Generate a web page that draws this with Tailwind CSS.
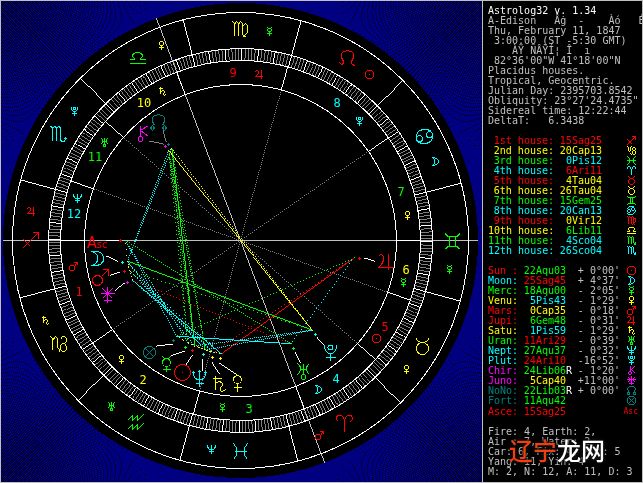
<!DOCTYPE html>
<html lang="en">
<head>
<meta charset="utf-8">
<meta name="viewport" content="width=device-width, initial-scale=1">
<title>Astrolog32 v. 1.34</title>
<script src="https://cdn.jsdelivr.net/npm/@tailwindcss/browser@4"></script>
</head>
<body class="bg-black">
<svg class="hidden" aria-hidden="true">
  <defs>
    <g id="Ari"><path d="M0 8V-1C0-10-8-10-8-5Q-8-3-6-2M0-1C0-10 8-10 8-5Q8-3 6-2"/></g>
    <g id="Tau"><circle cy="2" r="6"/><path d="M-6-8Q-5-4 0-4Q5-4 6-8"/></g>
    <g id="Gem"><path d="M-7-8Q-6-5-3-5H3Q6-5 7-8M-7 8Q-6 5-3 5H3Q6 5 7 8M-3-5V5M3-5V5"/></g>
    <g id="Can"><circle cx="-5" cy="2" r="3"/><circle cx="5" cy="-2" r="3"/><path d="M-8 0C-8-7 1-9 7-5M8 0C8 7-1 9-7 5"/></g>
    <g id="Leo"><path d="M-8 4L-6 6L-4 5V3L-6-1C-9-10 9-10 6-1L4 3V5L8 8"/></g>
    <g id="Vir"><path d="M-8-8L-6-6V6M-6-5L-4-8L-2-6V6M-2-5L0-8L2-6V5L6 8M2-3L5-6L7-4V3L2 8"/></g>
    <g id="Lib"><path d="M-8 5H8M-8 1H-3V0C-7-3-4-6 0-6S7-3 3 0V1H8"/></g>
    <g id="Sco"><path d="M-8-8L-6-7V6M-6-6L-4-8L-2-7V6M-2-6L0-8L2-7V4Q2 7 5 7Q7 7 7 3M5 5L7 3L9 5"/></g>
    <g id="Sag"><path d="M-8 8L8-8M2-8H8V-2M-7-1L0 6"/></g>
    <g id="Cap"><path d="M-8-8L-6-6V5M-6-4L-3-8L-1-6V3L2 6M2-5L4-8H6L8-6V-3L6-1H4L2 1V5L0 8M4-1H6L8 2V5L6 7H4L2 5"/></g>
    <g id="Aqu"><path d="M-8-2L-3-7V-2L2-7V-2L8-8M-8 7L-3 2V7L2 2V7L8 1"/></g>
    <g id="Pis"><path d="M-7-8Q0 0-7 8M7-8Q0 0 7 8M-6 0H6"/></g>
    <g id="Sun"><circle r="8"/><path d="M-.5 0H.5"/></g>
    <g id="Moon"><path d="M-6-7C9-9 9 9-6 7C1 4 1-4-6-7Z"/></g>
    <g id="Merc"><circle cy="-1" r="4"/><path d="M-4-8Q-4-5 0-5Q4-5 4-8M0 3V8M-4 6H4"/></g>
    <g id="Venu"><circle cy="-4" r="4"/><path d="M0 0V8M-4 4H4"/></g>
    <g id="Mars"><circle cx="-3" cy="3" r="5"/><path d="M1-1L8-8M2-8H8V-2"/></g>
    <g id="Jupi"><path d="M-7-5Q-5-8-3-6Q0-3-3 1Q-4 4-7 6H8M3-8V8"/></g>
    <g id="Satu"><path d="M-4-8V6M-7-5H2M-4 0Q-1-3 2-1Q4 1 2 3Q0 5 1 7Q3 9 6 6"/></g>
    <g id="Uran"><path d="M-6-8Q-3-6-3-3Q-3 1-6 3M6-8Q3-6 3-3Q3 1 6 3M-3-2H3M0-8V3"/><circle cy="5.5" r="2.5"/></g>
    <g id="Nept"><path d="M-6-7C-6-1-5 1 0 1S6-1 6-7M0-8V8M-4 5H4M-8-5L-6-7L-4-5M-2-6L0-8L2-6M4-5L6-7L8-5"/></g>
    <g id="Plut"><path d="M-6-8C-6-2-4 1 0 1S6-2 6-8M0 1V8M-5 5H5"/><circle cy="-5" r="2.5"/></g>
    <g id="Chir"><path d="M-2-8V3M6-8L-2-3L6 3"/><circle cx="-2" cy="5.5" r="2.5"/></g>
    <g id="Juno"><path d="M0-8V8M-7-1H7M-5-6L5 4M5-6L-5 4M-4 6H4"/></g>
    <g id="NoNo"><path d="M-4 3L-6-1C-9-10 9-10 6-1L4 3M-6 3L-4 5.5L-6 8L-8 5.5ZM6 3L8 5.5L6 8L4 5.5Z"/></g>
    <g id="Fort"><circle r="6"/><path d="M-4-4L4 4M4-4L-4 4"/></g>
  </defs>
</svg>

<main class="flex items-stretch border border-[#c0c0c0] bg-black text-[#c0c0c0]">
  <section class="relative min-w-0 flex-1 border-r border-[#c0c0c0]" aria-label="Natal wheel">
    <canvas id="burst" width="481" height="481" class="absolute inset-0 h-full w-full [image-rendering:pixelated]"></canvas>
    <svg id="wheel" viewBox="1 1 481 481" class="relative block w-full font-['DejaVu_Sans_Mono',monospace]" fill="none" shape-rendering="crispEdges"></svg>
  </section>

  <aside class="relative w-[159px] shrink-0 overflow-hidden pt-[5px] pl-[5px] font-['DejaVu_Sans_Mono',monospace] text-[10px] leading-[10px] *:whitespace-pre">
    <h1 class="text-white">Astrolog32 v. 1.34</h1>
    <p>A-Edison   Âġ  -    Àó   É</p>
    <p>Thu, February 11, 1847</p>
    <p> 3:00:00 (ST -5:30 GMT)</p>
    <p>    ÀŸ ÑÂŸÍ¦ Î  ı</p>
    <p> 82°36'00"W 41°18'00"N</p>
    <p>Placidus houses.</p>
    <p>Tropical, Geocentric.</p>
    <p>Julian Day: 2395703.8542</p>
    <p>Obliquity: 23°27'24.4735"</p>
    <p>Sidereal time: 12:22:44</p>
    <p>DeltaT:   6.3438</p>
    <table class="mt-2.5 w-full table-fixed" aria-label="House cusps">
      <colgroup><col class="w-[66px]"><col class="w-[48px]"><col></colgroup>
      <tbody id="houses"></tbody>
    </table>
    <table class="mt-2.5 w-full table-fixed" aria-label="Planet positions">
      <colgroup><col class="w-[30px]"><col class="w-[48px]"><col class="w-[6px]"><col class="w-[48px]"><col></colgroup>
      <tbody id="planets"></tbody>
    </table>
    <p class="mt-2.5">Fire: 4, Earth: 2,</p>
    <p>Air : 7, Water: 2</p>
    <p>Car: 6, Fix: 4, Mut: 5</p>
    <p>Yang: 11, Yin: 4</p>
    <p>M: 2, N: 12, A: 11, D: 3</p>
    <div class="absolute bottom-5 left-[26px] font-['Noto_Sans_CJK_SC',sans-serif] text-[24px] leading-6 font-medium text-white [text-shadow:0_0_2px_#000,0_0_3px_#000,0_0_4px_#333]"><span class="text-[#f04010]">辽宁</span>龙网</div>
  </aside>
</main>

<script>
const R = '#ff0000', Y = '#ffff00', G = '#00ff00', C = '#00ffff', M = '#ff00ff', T = '#008080', W = '#ffffff', S = '#c0c0c0', D = '#808080';
const signs = ['Ari','Tau','Gem','Can','Leo','Vir','Lib','Sco','Sag','Cap','Aqu','Pis'];
const element = [R, Y, G, C];
const longitude = p => +p.slice(0, -5) + +p.slice(-2) / 60 + 30 * signs.indexOf(p.slice(-5, -2));
const signColor = p => element[signs.indexOf(p.slice(-5, -2)) % 4];

const houses = ['15Sag25','20Cap13','0Pis12','6Ari11','4Tau04','26Tau04','15Gem25','20Can13','0Vir12','6Lib11','4Sco04','26Sco04'];
const ordinals = ['1st','2nd','3rd','4th','5th','6th','7th','8th','9th','10th','11th','12th'];
const houseSigns = ['Sag','Cap','Pis','Ari','Tau','Tau','Gem','Can','Vir','Lib','Sco','Sco'];
const planets = [
  ['Sun','22Aqu03','',"+ 0°00'",R], ['Moon','25Sag45','',"+ 4°37'",C], ['Merc','18Aqu00','',"- 2°05'",G],
  ['Venu','5Pis43','',"- 1°29'",Y], ['Mars','0Cap35','',"- 0°18'",R], ['Jupi','6Gem48','',"- 0°31'",R],
  ['Satu','1Pis59','',"- 1°29'",Y], ['Uran','11Ari29','',"- 0°39'",G], ['Nept','27Aqu37','',"- 0°32'",C],
  ['Plut','24Ari10','',"-16°52'",C], ['Chir','24Lib06','R',"- 1°20'",M], ['Juno','5Cap40','',"+11°00'",M],
  ['NoNo','22Lib03','R',"+ 0°00'",T], ['Fort','11Aqu42','','',T], ['Asce','15Sag25','','',R]
];

/* Nine-pixel versions of the symbols */
const tiny = {
  Sun: '..#####../.#.....#./#.......#/#.......#/#...#...#/#.......#/#.......#/.#.....#./..#####..',
  Moon: '.###...../..#.##.../...#..#../...#...#./...#...#./...#...#./...#..#../..#.##.../.###.....',
  Merc: '..#...#../...###.../..#...#../..#...#../...###.../....#..../..#####../....#..../....#....',
  Venu: '...###.../..#...#../..#...#../..#...#../...###.../....#..../..#####../....#..../....#....',
  Mars: '.....####/.......##/......#.#/.####.#../#....#.../#....#.../#....#.../#....#.../.####....',
  Jupi: '.##...#../#..#..#../...#..#../...#..#../..#...#../.#....#../########./......#../......#..',
  Satu: '..#....../.####..../..#....../..#.##.../..##..#../..#...#../..#..#.../.....#.#./......#..',
  Uran: '.#..#..#./..#.#.#../..#.#.#../..#####../..#.#.#../.#..#..#./...###.../...#.#.../...###...',
  Nept: '#...#...#/#...#...#/##..#..##/.#..#..#./..#####../....#..../..#####../....#..../....#....',
  Plut: '.#.###.#./.#.#.#.#./.#.###.#./..#...#../...###.../....#..../..#####../....#..../....#....',
  Chir: '...#...#./...#..#../...#.#.../...##..../...#.#.../..##..#../.#..#..#./.#..#..../..##.....',
  Juno: '....#..../.#..#..#./..#.#.#../#########/..#.#.#../.#..#..#./....#..../..#####../....#....',
  NoNo: '..#####../.#.....#./#.......#/#.......#/.#.....#./.#.....#./###...###/#.#...#.#/###...###',
  Fort: '..#####../.#.....#./#.#...#.#/#..#.#..#/#...#...#/#..#.#..#/#.#...#.#/.#.....#./..#####..',
  Sag: '.....####/.......##/......#.#/#....#..#/.#..#..../..##...../..##...../.#..#..../#........',
  Cap: '#...#..../.#.#..##./.#.#.#..#/.#.#.#..#/.#.#..##./..#..#..#/.....#..#/...#.#..#/....#.##.',
  Pis: '#.......#/.#.....#./..#...#../..#...#../#########/..#...#../..#...#../.#.....#./#.......#',
  Ari: '.##...##./#..#.#..#/#..#.#..#/....#..../....#..../....#..../....#..../....#..../....#....',
  Tau: '.#.....#./..#...#../...###.../..#...#../.#.....#./.#.....#./.#.....#./..#...#../...###...',
  Gem: '#.......#/.#######./...#.#.../...#.#.../...#.#.../...#.#.../...#.#.../.#######./#.......#',
  Can: '..#####../.#...##../#...#..#./.##.#..#./#..#.##.#/#..#....#/.##....#./#.....#../.#####...',
  Vir: '#.#..#.../.#.##.#../.#..#.###/.#..#.#.#/.#..#.#.#/.#..#.#.#/.#..#.##./.#..#.#../.....#.#.',
  Lib: '........./..#####../.#.....#./.#.....#./..#...#../###...###/........./#########/.........',
  Sco: '#.#..#.../.#.##.#../.#..#.#../.#..#.#../.#..#.#../.#..#.#../.#..#.#.#/.#..#..##/.......##'
};
const dots = id => tiny[id].split('/').map((row, y) => [...row].map((p, x) => p === '#' ? `M${x} ${y}h1v1h-1z` : '').join('')).join('');

const icon = (id, c) => id === 'Asce'
  ? `<span class="text-[8px]" style="color:${c}">Asc</span>`
  : `<svg viewBox="0 0 9 9" class="inline-block h-[9px] w-[9px] align-top" shape-rendering="crispEdges" fill="${c}"><path d="${dots(id)}"/></svg>`;

document.getElementById('houses').innerHTML = houses.map((p, i) => {
  const c = element[i % 4];
  return `<tr class="h-[10px]"><th scope="row" class="p-0 text-right font-normal" style="color:${c}">${ordinals[i]} house:</th><td class="p-0 text-right" style="color:${signColor(p)}">${p}</td><td class="p-0 pr-1.5 text-right">${icon(houseSigns[i], c)}</td></tr>`;
}).join('');
document.getElementById('planets').innerHTML = planets.map(([n, p, r, d, c]) =>
  `<tr class="h-[10px]"><th scope="row" class="p-0 text-left font-normal" style="color:${c}">${n.padEnd(4)}:</th><td class="p-0 text-right" style="color:${signColor(p)}">${p}</td><td class="p-0 text-white">${r}</td><td class="p-0 text-right">${d}</td><td class="${n === 'Asce' ? 'p-0 pr-1 text-right' : 'p-0 pr-1.5 text-right'}">${icon(n, c)}</td></tr>`).join('');

/* Radial navy burst behind the wheel */
const ctx = document.getElementById('burst').getContext('2d');
ctx.fillStyle = '#000080';
for (let i = 0, n = 1680; i < n; i++) {
  const a = i * 2 * Math.PI / n, dx = Math.cos(a), dy = Math.sin(a), k = Math.max(Math.abs(dx), Math.abs(dy));
  for (let s = 160; s <= 241; s++) ctx.fillRect(Math.round(240 + dx / k * s), Math.round(240 + dy / k * s), 1, 1);
}

/* Wheel */
const O = 240.5;
const at = (lon, r) => { const a = (lon - longitude('15Sag25')) * Math.PI / 180 + Math.PI; return [O + r * Math.cos(a), O - r * Math.sin(a)]; };
/* Pixel-stepped line; gap is the number of pixels skipped after each one drawn */
const seg = (a, b, c, gap = 0) => {
  const dx = b[0] - a[0], dy = b[1] - a[1], n = Math.max(1, Math.round(Math.max(Math.abs(dx), Math.abs(dy))));
  let d = '';
  for (let i = 0; i <= n; i += gap + 1) d += `M${Math.floor(a[0] + dx * i / n)} ${Math.floor(a[1] + dy * i / n)}h1v1h-1z`;
  return `<path d="${d}" fill="${c}"/>`;
};
const ray = (lon, r1, r2, c, gap) => seg(at(lon, r1), at(lon, r2), c, gap);
const ring = r => `<circle cx="${O}" cy="${O}" r="${r}" stroke="${W}"/>`;
const glyph = (id, x, y, c) => `<g transform="translate(${x} ${y})" stroke="${c}"><use href="#${id}"/></g>`;
const smallGlyph = (id, x, y, c) => `<path transform="translate(${x - 4} ${y - 4})" d="${dots(id)}" fill="${c}"/>`;
let out = `<circle cx="${O}" cy="${O}" r="237.5" fill="#000"/>`;

for (let d = 0; d < 360; d++) if (d % 5) out += ray(d, 181, 191, D);
for (let d = 0; d < 360; d += 5) out += ray(d, 180, 192, W);
houses.forEach((p, i) => {
  const l = longitude(p);
  out += i % 3 ? ray(l, 0, 156, D, 1) : ray(l, 0, 237, S);
  out += ray(l, 156, 180, W);
});
for (let i = 0; i < 12; i++) out += ray(i * 30, 192, 228, W);
out += [228, 192, 180, 156].map(ring).join('');

/* Aspects: wider orbs get sparser dots, and all but the closest sextiles are dotted */
const aspects = [[0, 10.5, Y], [60, 6, C], [90, 7, R], [120, 7, G], [180, 7, Y]];
for (let i = 0; i < planets.length; i++) for (let j = i + 1; j < planets.length; j++) {
  const a = longitude(planets[i][1]), b = longitude(planets[j][1]);
  let diff = Math.abs(a - b); if (diff > 180) diff = 360 - diff;
  for (const [angle, max, c] of aspects) {
    const orb = Math.abs(diff - angle);
    const least = angle === 60 && orb > 1 ? 1 : 0;
    if (orb < max) out += seg(at(a, 115), at(b, 115), c, Math.max(least, Math.floor(orb / 2)));
  }
}
for (const [, p, , , c] of planets) {
  const [x, y] = at(longitude(p), 120).map(v => Math.floor(v) + .5);
  out += `<path d="M${x - 1.5} ${y}h3M${x} ${y - 1.5}v3" stroke="${c}"/>`;
}

/* Pointers between markers and their glyphs */
[[118,240,106,240],[172,344,156,346],[184,351,170,356],[192,355,186,364],[202.5,359,202.5,370],[212,362,219,373],[219,363,237,375],
 [117,261,106,256],[119,272,110,275],[124,283,115,290],[364,258,374,261],[317,337,324,345],[295,352,300,362]]
  .forEach(([a, b, c, d]) => out += seg([a, b], [c, d], W));
out += seg([149, 141], [163, 144], D) + seg([163, 130], [166, 141], D);

[['Lib',137,58,G],['Vir',240,29,Y],['Leo',347,58,R],['Can',424,136,C],['Gem',452,241,G],['Tau',422,346,Y],['Ari',344,423,R],['Pis',240,451,C],['Aqu',135,422,G],['Cap',58,344,Y],['Sag',30,240,R],['Sco',58,134,C],
 ['Sun',182,372,R],['Moon',98,258,C],['Merc',166,363,G],['Venu',237,383,Y],['Mars',100,277,R],['Jupi',385,261,R],['Satu',219,383,Y],['Uran',303,371,G],['Nept',199,378,C],['Plut',330,352,C],['Chir',142,133,M],['Juno',107,294,M],['NoNo',158,122,T],['Fort',149,352,T]]
  .forEach(g => out += glyph(g[0], g[1] + .5, g[2] + .5, g[3]));
[['Venu',161,45,Y],['Plut',74,111,C],['Jupi',31,211,R],['Satu',45,320,Y],['Uran',111,406,G],['Nept',211,449,C],['Mars',319,435,R],['Venu',406,369,Y],['Merc',449,269,G],['Moon',435,161,C],['Sun',369,74,R],['Merc',269,31,G],
 ['Satu',162,91,Y],['Uran',104,142,G],['Nept',77,198,C],['Mars',73,266,R],['Venu',121,359,Y],['Merc',222,407,G],['Moon',318,389,C],['Sun',376,338,R],['Merc',403,282,G],['Venu',407,215,Y],['Plut',359,121,C],['Jupi',259,74,R]]
  .forEach(g => out += smallGlyph(...g));
[[79,291],[143,379],[249,408],[336,378],[385,326],[406,269],[401,191],[337,102],[233,72],[144,102],[95,156],[74,213]]
  .forEach(([x, y], i) => out += `<text x="${x}" y="${y + 5}" text-anchor="middle" class="text-[12px]" fill="${element[i % 4]}">${i + 1}</text>`);
out += `<text x="87" y="248" class="font-['DejaVu_Sans_Condensed','DejaVu_Sans',sans-serif]" fill="${R}"><tspan class="text-[16px]">A</tspan><tspan class="text-[11px]">sc</tspan></text>`;
document.getElementById('wheel').innerHTML = out;
</script>
</body>
</html>
